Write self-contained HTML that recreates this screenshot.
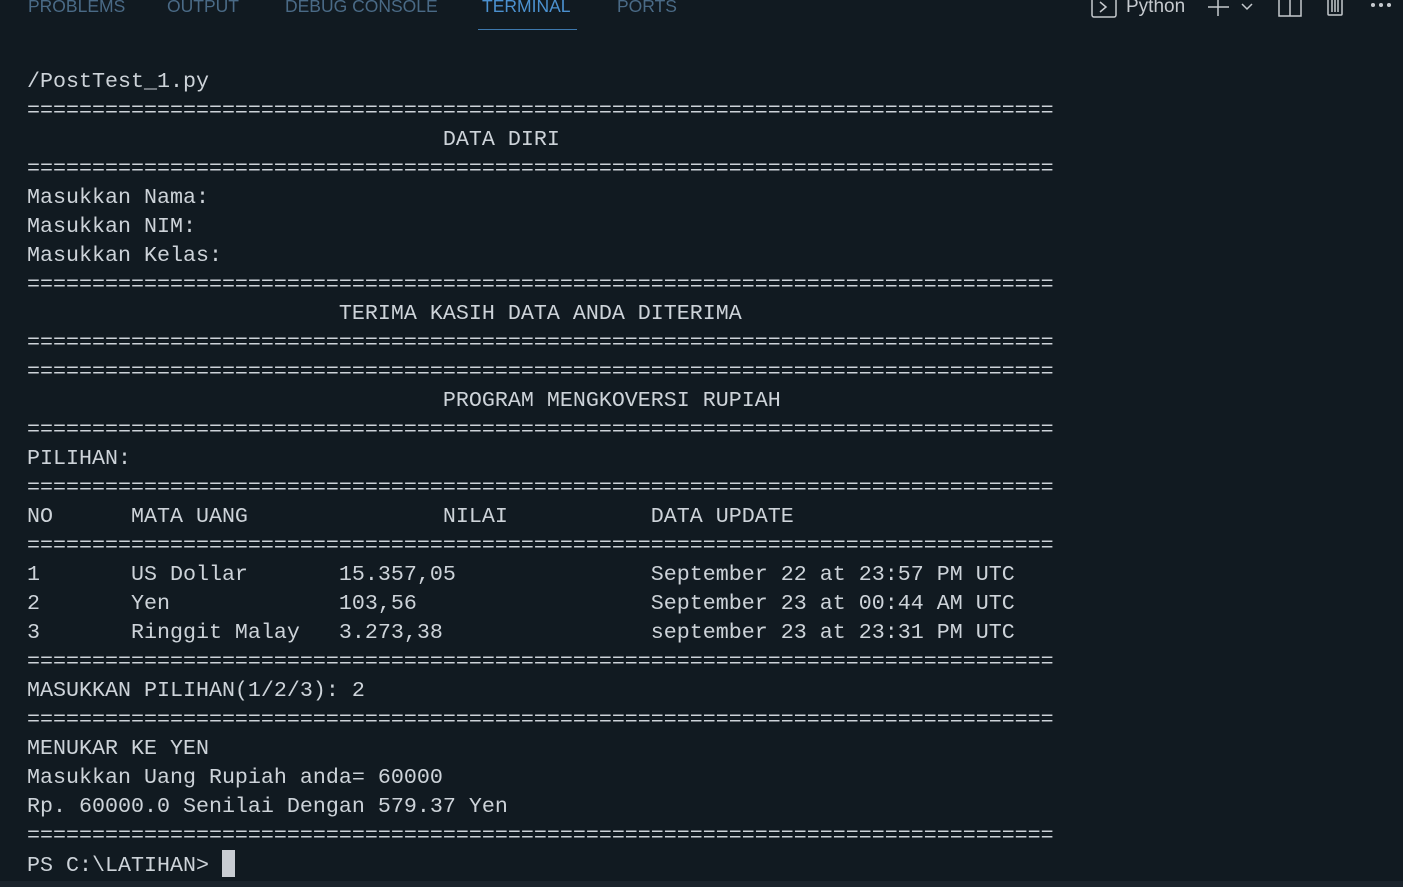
<!DOCTYPE html>
<html><head><meta charset="utf-8"><style>
html,body{margin:0;padding:0;width:1403px;height:887px;background:#111a21;overflow:hidden;font-family:"Liberation Sans",sans-serif}
.tab{position:absolute;top:-4px;font-size:17.5px;color:#4a6a86;letter-spacing:0}
pre{position:absolute;left:27px;top:67px;margin:0;font-family:"Liberation Mono",monospace;font-size:21.67px;line-height:29px;color:#cdd3d9;white-space:pre}
.bot{position:absolute;left:0;top:881px;width:1403px;height:6px;background:#1b242c}
.cur{display:inline-block;width:13px;height:27px;background:#c8ccd2;vertical-align:-6px}
</style></head><body>
<div class="tab" style="left:28px">PROBLEMS</div>
<div class="tab" style="left:167px">OUTPUT</div>
<div class="tab" style="left:285px">DEBUG CONSOLE</div>
<div class="tab" style="left:482px;color:#4b90cf">TERMINAL</div>
<div style="position:absolute;left:478px;top:29px;width:99px;height:1px;background:#3e78ad"></div>
<div class="tab" style="left:617px">PORTS</div>
<svg style="position:absolute;left:1090px;top:0" width="310" height="20" viewBox="0 0 310 20" fill="none" stroke="#c5c9ce" stroke-width="1.5">
<rect x="2" y="-4" width="24" height="21" rx="2"/><path d="M10 2l6 5-6 5"/>
<path d="M128 -3v19M118 7h21"/><path d="M152 4l5 5 5-5"/>
<rect x="189" y="-4" width="22" height="20"/><path d="M200 -4v20"/>
<rect x="238" y="-4" width="14" height="19" rx="1"/><path d="M242 0v12M245 0v12M248 0v12"/>
<circle cx="283" cy="5" r="1.3" fill="#c5c9ce"/><circle cx="291" cy="5" r="1.3" fill="#c5c9ce"/><circle cx="299" cy="5" r="1.3" fill="#c5c9ce"/>
</svg>
<div style="position:absolute;left:1126px;top:-4px;font-size:19px;color:#c5c9ce">Python</div>
<pre>/PostTest_1.py
===============================================================================
                                DATA DIRI
===============================================================================
Masukkan Nama:
Masukkan NIM:
Masukkan Kelas:
===============================================================================
                        TERIMA KASIH DATA ANDA DITERIMA
===============================================================================
===============================================================================
                                PROGRAM MENGKOVERSI RUPIAH
===============================================================================
PILIHAN:
===============================================================================
NO      MATA UANG               NILAI           DATA UPDATE
===============================================================================
1       US Dollar       15.357,05               September 22 at 23:57 PM UTC
2       Yen             103,56                  September 23 at 00:44 AM UTC
3       Ringgit Malay   3.273,38                september 23 at 23:31 PM UTC
===============================================================================
MASUKKAN PILIHAN(1/2/3): 2
===============================================================================
MENUKAR KE YEN
Masukkan Uang Rupiah anda= 60000
Rp. 60000.0 Senilai Dengan 579.37 Yen
===============================================================================
PS C:\LATIHAN> <span class="cur"></span></pre>
<div class="bot"></div>
</body></html>
